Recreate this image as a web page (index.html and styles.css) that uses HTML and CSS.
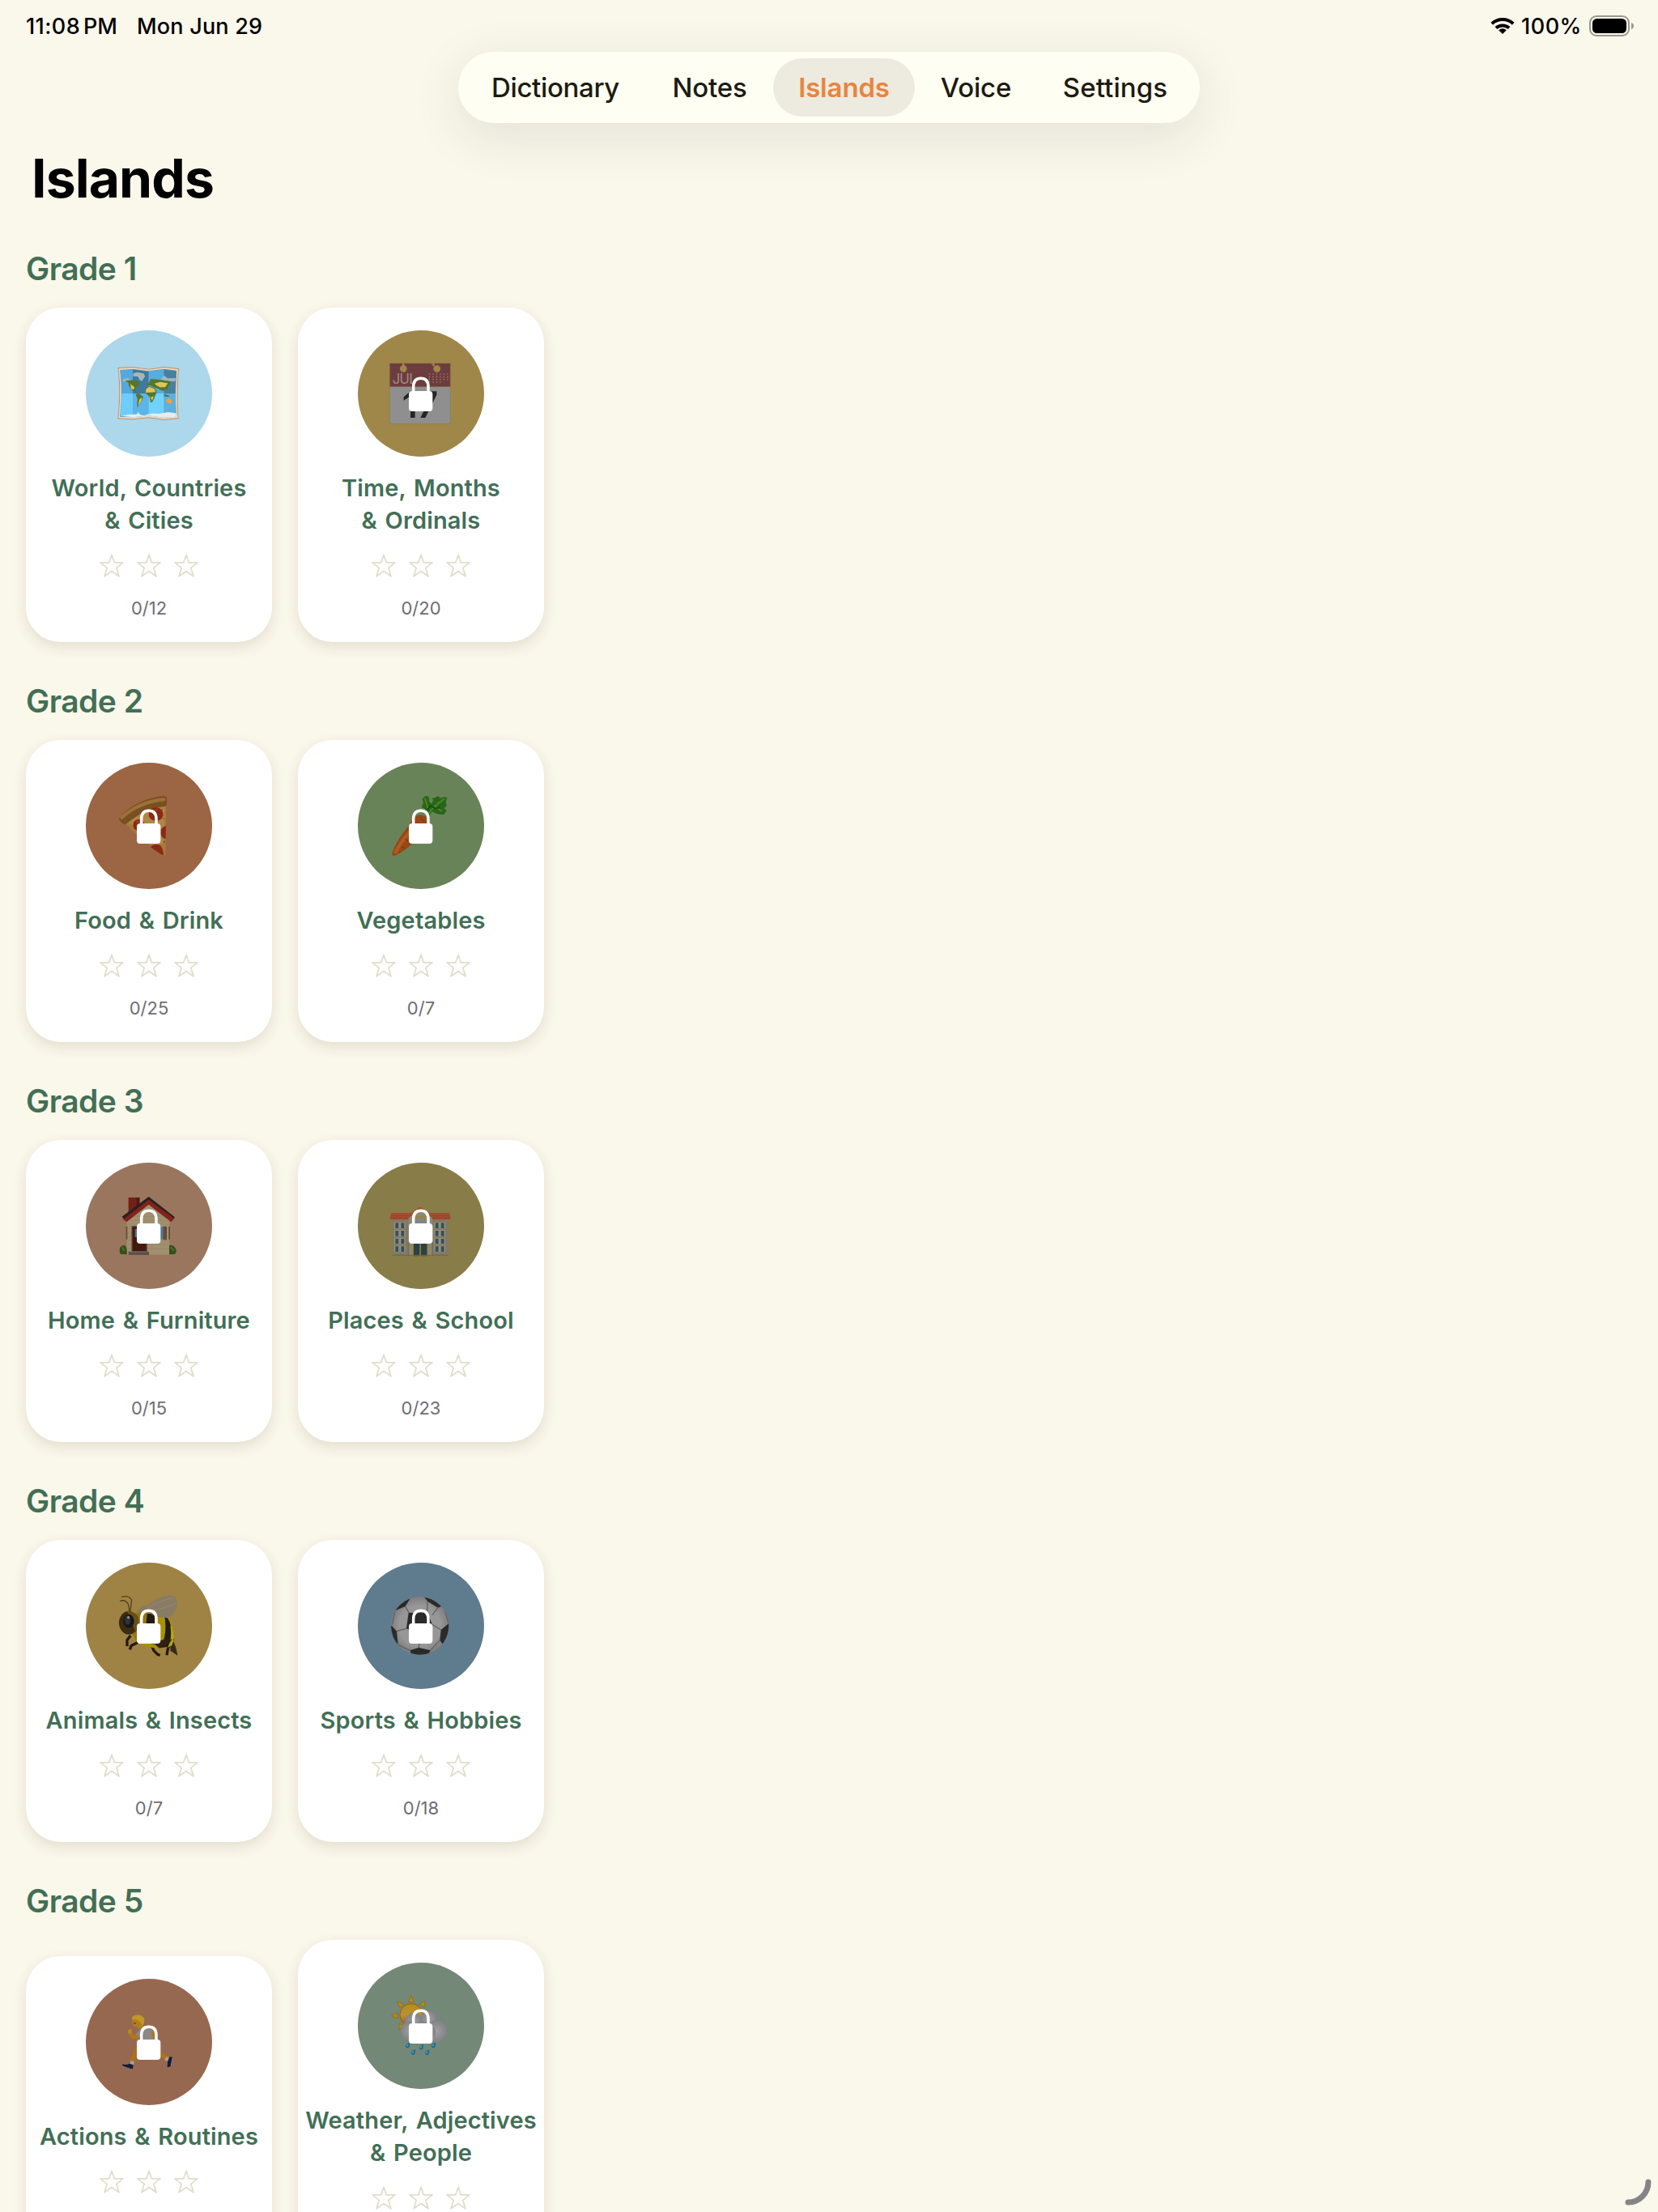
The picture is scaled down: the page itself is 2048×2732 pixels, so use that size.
FILE: index.html
```html
<!DOCTYPE html>
<html lang="en">
<head>
<meta charset="utf-8">
<title>Islands</title>
<link rel="stylesheet" href="styles.css">
</head>
<body>
<svg class="defs" aria-hidden="true">
  <symbol id="star" viewBox="0 0 30 29"><path d="M15 1.2 18.3 10.9H28.9L20.9 17.4 23.9 27.8 15 21.6 6.1 27.8 9.1 17.4 1.1 10.9H11.7Z" fill="none" stroke="#e0decb" stroke-width="1.8" stroke-linejoin="round"/></symbol>
  <symbol id="stars" viewBox="0 0 122 29"><use href="#star" x="0" width="30" height="29"/><use href="#star" x="46" width="30" height="29"/><use href="#star" x="92" width="30" height="29"/></symbol>
  <symbol id="lock" viewBox="0 0 468 468"><path d="M206 232V209C206 188 216 178 233.500 178S261 188 261 209V232" fill="none" stroke="#fff" stroke-width="10.500"/><rect x="189" y="225" width="88" height="75" rx="12" fill="#fff"/></symbol>
</svg>

<header class="status">
  <span class="time">11:08<span class="ampm">PM</span></span>
  <span class="date">Mon Jun 29</span>
  <svg class="wifi" viewBox="0 0 30 22"><g fill="none" stroke="#000" stroke-width="4"><path d="M1.800 8.200A19.500 19.500 0 0 1 28.200 8.200"/><path d="M6.900 13.600A12 12 0 0 1 23.100 13.600"/></g><path d="M15 21 10.200 16.200A7 7 0 0 1 19.800 16.200Z"/></svg>
  <span class="percent">100%</span>
  <svg class="battery" viewBox="0 0 56 26"><rect x="1" y="1" width="48" height="24" rx="8" fill="none" stroke="#9b998e" stroke-width="2"/><rect x="4" y="4" width="42" height="18" rx="5.500"/><path d="M52 9Q55 10 55 13T52 17Z" fill="#9b998e"/></svg>
</header>

<nav class="tabs">
  <a class="tab dictionary">Dictionary</a>
  <a class="tab notes">Notes</a>
  <a class="tab islands active">Islands</a>
  <a class="tab voice">Voice</a>
  <a class="tab settings">Settings</a>
</nav>

<main>
  <h1>Islands</h1>

  <section>
    <h2>Grade 1</h2>
    <div class="row">
      <article class="card">
        <svg class="badge map" viewBox="0 0 468 468">
          <path d="M119 138 174 135 233 143 290 135 345 141Q336 234 344 328L289 332 233 325 175 331 118 328Q129 234 119 138Z" fill="#c08f62"/>
          <path d="M122 141 174 138 233 146 290 138 342 144Q333 234 341 325L289 329 233 322 175 328 121 325Q132 234 122 141Z" fill="#eadcc8"/>
          <path d="M127 147 174 143 233 151 290 143 337 149Q329 234 336 320L289 323 233 316 175 322 126 320Q137 234 127 147Z" fill="#5f97bb"/>
          <path d="M127 149 174 145V234H134Q133 190 127 149Z" fill="#53a9de"/><path d="M174 145 233 153V234H174Z" fill="#40799d"/><path d="M233 153 290 145V234H233Z" fill="#55ade0"/><path d="M290 145 335 151 332 234H290Z" fill="#47819f"/>
          <path d="M134 234H174V320L128 318Z" fill="#6ecdff"/><path d="M174 234H233V314L174 320Z" fill="#5bb5e8"/><path d="M233 234H290V321L233 314Z" fill="#70d2ff"/><path d="M290 234H332L335 318 290 321Z" fill="#5dafdc"/>
          <path d="M175 160 190 155 215 160 219 171 208 188 199 183 193 171 176 170ZM136 183 151 176 170 184 167 191 139 190ZM276 183 290 167 304 178 335 177 330 190 290 186Z" fill="#a8b5b9"/>
          <path d="M145 187 170 184 195 190 199 199 185 216 180 216 185 226 195 234 188 232 172 222 160 207 158 194ZM185 237 196 233 213 247 207 263 196 275 191 287 190 268 192 256ZM226 203 237 190 240 180 275 183 313 190 311 203 304 207 303 220 294 219 287 225 277 221 269 217 255 212 241 205ZM221 216 235 207 254 213 263 228 256 245 248 265 240 268 236 246 222 233Z" fill="#56762a"/>
          <path d="M165 199 180 210 178 220 168 216ZM199 255 209 249 205 264 194 277ZM254 197 275 191 304 196 294 211 275 211 263 205ZM223 218 234 209 253 216 259 229 222 231ZM240 248 251 244 246 262Z" fill="#dfc65b"/>
          <path d="M297 258 306 251 317 257 320 266 314 273 300 266Z" fill="#f5a12d"/><path d="M288 236 305 241 311 245 292 245ZM307 202 305 216 300 223Z" fill="#497838"/>
          <path d="M132 317 158 312 189 311 194 302 200 312 215 316 229 311 245 308 273 309 305 303 334 307 336 320 289 323 233 316 175 322Z" fill="#e5edf0"/>
        </svg>
        <h3>World, Countries<br>&amp; Cities</h3>
        <svg class="stars"><use href="#stars"/></svg>
        <p>0/12</p>
      </article>
      <article class="card">
        <svg class="badge calendar" viewBox="0 0 468 468">
          <path d="M118 122H343V209H118Z" fill="#6d3d3e"/><path d="M118 209H343V346H118Z" fill="#8f8f8f"/><path d="M118 122V346H343V122" fill="none" stroke="#89794f" stroke-width="1.500"/>
          <g fill="#9f8749"><circle cx="169" cy="142" r="13"/><circle cx="293" cy="142" r="13"/><path d="M165 122H172V133H165ZM270 124 280 122H284V133H278L276 126Z"/></g>
          <text class="month" x="128" y="197">JUL</text>
          <path d="M263 162H337M263 172H337M263 182H337M250 192H310" stroke="#9f7170" stroke-width="5" stroke-dasharray="4 9.500"/>
          <path d="M170 247 195 226H212V324H195V244L170 260ZM218 226H292V239L250 324H232L272 242H218Z" fill="#252525"/>
          <use href="#lock"/>
        </svg>
        <h3>Time, Months<br>&amp; Ordinals</h3>
        <svg class="stars"><use href="#stars"/></svg>
        <p>0/20</p>
      </article>
    </div>
  </section>

  <section>
    <h2>Grade 2</h2>
    <div class="row">
      <article class="card">
        <svg class="badge pizza" viewBox="0 0 468 468">
          <path d="M146 226Q215 160 298 153L296 335Q294 347 284 341Q213 295 146 226Z" fill="#a6793d"/>
          <path d="M158 221Q220 169 292 164L290 300 273 302Z" fill="#ae8745"/>
          <path d="M123 210Q125 199 141 186 202 133 285 124 300 122 300 132V153Q299 162 290 162 216 170 148 228 139 231 134 222 126 219 123 210Z" fill="#785022"/>
          <path d="M133 203Q197 145 289 136" fill="none" stroke="#9b7135" stroke-width="13" stroke-linecap="round"/>
          <g fill="#8b2916"><ellipse cx="260" cy="191" rx="27" ry="25"/><ellipse cx="196" cy="231" rx="21" ry="21"/><path d="M297 233Q274 241 277 263 281 281 296 282ZM240 313Q250 299 274 305 286 312 288 343L277 338Z"/></g>
          <path d="M245 180Q254 173 265 176M186 221 201 217" stroke="#a6422a" stroke-width="5"/>
          <g fill="#643a1c"><circle cx="282" cy="174" r="2"/><circle cx="289" cy="207" r="2"/><circle cx="290" cy="293" r="3"/><circle cx="215" cy="190" r="2"/></g>
          <use href="#lock"/>
        </svg>
        <h3>Food &amp; Drink</h3>
        <svg class="stars"><use href="#stars"/></svg>
        <p>0/25</p>
      </article>
      <article class="card">
        <svg class="badge carrot" viewBox="0 0 468 468">
          <path d="M126 337Q143 286 190 232 204 199 225 194 255 191 264 218 265 242 215 288 174 329 138 344 127 347 126 337Z" fill="#974817"/>
          <path d="M137 336Q162 287 213 235" fill="none" stroke="#b05c20" stroke-width="12"/><path d="M162 312 173 316M174 282 187 291M232 207 247 218" stroke="#763812" stroke-width="3"/>
          <path d="M257 199Q243 184 250 172L236 165 243 149 239 134 250 123 263 126 265 143 273 153 280 137 273 132 287 130 297 123 305 131 319 127 331 129 326 147 330 158 320 169 329 178 318 193 301 191 287 187 275 181 263 198Z" fill="#26671a"/>
          <path d="M261 190Q277 163 322 133M249 132 259 169M287 162 311 180" fill="none" stroke="#4c861c" stroke-width="6"/><path d="M258 173 270 159 286 169 305 166" fill="none" stroke="#184b16" stroke-width="5"/>
          <use href="#lock"/>
        </svg>
        <h3>Vegetables</h3>
        <svg class="stars"><use href="#stars"/></svg>
        <p>0/7</p>
      </article>
    </div>
  </section>

  <section>
    <h2>Grade 3</h2>
    <div class="row">
      <article class="card">
        <svg class="badge house" viewBox="0 0 468 468">
          <path d="M158 129H199V195H158Z" fill="#732019"/><path d="M188 129H199V180H188Z" fill="#4f1713"/>
          <path d="M152 205 233 142 310 205V341H152Z" fill="#a19070"/>
          <path d="M154 228H308M154 243H308M154 258H308M154 273H308M154 288H308M154 303H308M154 318H308M187 185H276M174 199H292M162 214H303" stroke="#948365" stroke-width="2"/>
          <path d="M134 200 233 126 330 202 321 212 233 145 143 213Z" fill="#242321"/><path d="M139 209 233 137 328 207 316 220 233 155 151 220Z" fill="#84211b"/>
          <path d="M169 234H228V331H169Z" fill="#65503b"/><path d="M173 238H224V330H173Z" fill="#43180f"/><path d="M182 246H205V276H182ZM268 238H287V284H268Z" fill="#4c7591"/><path d="M287 236H300V286H287ZM307 236H312V284H307ZM149 236H154V284H149Z" fill="#634a37"/>
          <path d="M158 329H234V342H158Z" fill="#5b504b"/><path d="M164 330H228" stroke="#82736c" stroke-width="3"/>
          <path d="M128 339Q118 308 143 306 152 307 153 340ZM309 340V307Q325 302 334 320 337 331 330 339Z" fill="#344f1c"/><path d="M134 312 144 328M315 313 326 326" stroke="#587027" stroke-width="5"/>
          <use href="#lock"/>
        </svg>
        <h3>Home &amp; Furniture</h3>
        <svg class="stars"><use href="#stars"/></svg>
        <p>0/15</p>
      </article>
      <article class="card">
        <svg class="badge school" viewBox="0 0 468 468">
          <path d="M127 209H336V343H127Z" fill="#817a60"/><path d="M124 186H340L344 208 339 211H123L119 208Z" fill="#a54d30"/><path d="M122 197H341M120 205H343" stroke="#874028" stroke-width="2"/>
          <path d="M188 205 232 169 276 205V345H188Z" fill="#908873"/><path d="M198 184 231 164 265 184 274 195 231 173 188 195Z" fill="#a54d30"/>
          <ellipse cx="232" cy="216" rx="25" ry="23" fill="#858585"/><path d="M210 208Q232 187 254 208" fill="none" stroke="#9b862e" stroke-width="6"/>
          <path d="M145 221V335M166 221V335M293 221V335M314 221V335" stroke="#aaa084" stroke-width="18" stroke-dasharray="23 6"/><path d="M145 223V335M166 223V335M293 223V335M314 223V335" stroke="#334e60" stroke-width="12" stroke-dasharray="20 9"/>
          <path d="M188 295V346M276 295V346" stroke="#77715e" stroke-width="6"/><path d="M203 298H260V347H203Z" fill="#927f2b"/><path d="M207 298H229V346H207ZM234 298H256V346H234Z" fill="#2b4148"/><path d="M128 343H336" stroke="#6a6658" stroke-width="3"/>
          <use href="#lock"/>
        </svg>
        <h3>Places &amp; School</h3>
        <svg class="stars"><use href="#stars"/></svg>
        <p>0/23</p>
      </article>
    </div>
  </section>

  <section>
    <h2>Grade 4</h2>
    <div class="row">
      <article class="card">
        <svg class="badge bee" viewBox="0 0 468 468">
          <path d="M132 127Q160 119 170 139L164 184M126 142Q149 135 158 156L162 185" fill="none" stroke="#574020" stroke-width="4"/>
          <path d="M166 270 153 287 153 310M194 295 168 308 163 322M242 302 252 326 266 340 275 343M323 281 304 319 300 343" fill="none" stroke="#251b10" stroke-width="10"/>
          <path d="M316 276Q335 306 340 344L313 326Z" fill="#372a18"/>
          <path d="M176 193Q214 167 278 194 326 202 326 273 320 327 252 316 179 306 169 258Z" fill="#a99100"/>
          <path d="M176 195Q199 169 230 185L214 280 188 291 169 258Z" fill="#927514"/><path d="M227 189H258L253 302 217 296ZM291 194Q333 227 309 311L277 316Q304 263 291 194Z" fill="#241c11"/>
          <path d="M318 236Q333 277 319 307L303 315Q321 281 313 234Z" fill="#b1a51c"/><path d="M250 298Q283 281 319 284 307 308 273 317Z" fill="#30220e"/>
          <path d="M185 188Q206 155 227 158 263 129 309 121 333 117 339 142 339 185 311 202 284 210 247 193 219 173 185 188Z" fill="#8a7b64"/><path d="M229 168Q278 139 327 130M235 178Q292 171 337 149" fill="none" stroke="#968770" stroke-width="3"/>
          <ellipse cx="159" cy="223" rx="36" ry="43" fill="#3b2b12"/><path d="M153 179Q185 181 195 203L197 230 185 260Q172 223 153 179Z" fill="#675018"/><ellipse cx="159" cy="217" rx="20" ry="25" fill="#171717"/><ellipse cx="155" cy="213" rx="11" ry="17" fill="#303236"/><ellipse cx="158" cy="203" rx="5" ry="5" fill="#92928f"/>
          <use href="#lock"/>
        </svg>
        <h3>Animals &amp; Insects</h3>
        <svg class="stars"><use href="#stars"/></svg>
        <p>0/7</p>
      </article>
      <article class="card">
        <svg class="badge ball" viewBox="0 0 468 468">
          <defs><clipPath id="ball-edge"><circle cx="230" cy="234" r="107"/></clipPath><radialGradient id="ball-shade"><stop offset=".7" stop-color="#979797"/><stop offset="1" stop-color="#7d7d7d"/></radialGradient></defs>
          <circle cx="230" cy="234" r="108" fill="url(#ball-shade)"/>
          <g clip-path="url(#ball-edge)"><path d="M138 178 176 162 194 133 165 120 123 157ZM243 124 258 143 297 167 321 157 294 126ZM188 186 258 184 276 230 231 267 180 244ZM125 233 144 254 149 304 137 308 113 252ZM308 249 338 224 348 274 315 304 304 287ZM193 325 226 315 269 325 260 346H201Z" fill="#2a2a2a"/><path d="M176 162 190 187M258 143 257 184M297 167 276 194M316 157 336 224M138 178 127 229M144 254 180 244M276 230 308 249M231 267 226 315M149 304 193 325M304 287 269 325" fill="none" stroke="#606060" stroke-width="4"/></g>
          <use href="#lock"/>
        </svg>
        <h3>Sports &amp; Hobbies</h3>
        <svg class="stars"><use href="#stars"/></svg>
        <p>0/18</p>
      </article>
    </div>
  </section>

  <section>
    <h2>Grade 5</h2>
    <div class="row">
      <article class="card">
        <svg class="badge runner" viewBox="0 0 468 468">
          <path d="M190 260Q181 287 171 307M272 279 306 296" fill="none" stroke="#ad711c" stroke-width="17"/><path d="M165 309 178 313M303 291 297 303" stroke="#a7a3a0" stroke-width="11"/>
          <path d="M135 316Q150 321 163 314L176 320 174 333Q170 338 158 333L137 324ZM311 288 322 292 315 325 302 328 303 308Z" fill="#151c37"/><path d="M136 324 172 336M321 294 315 326" stroke="#858089" stroke-width="3"/>
          <path d="M204 184Q222 174 249 188L264 215 244 267 204 258 211 224 183 207Z" fill="#8b8886"/><path d="M241 188Q262 198 257 225L247 218Z" fill="#b0791d"/><path d="M183 207 188 217 175 216 161 199" fill="none" stroke="#ae781d" stroke-width="13"/><path d="M155 192 163 185 171 187 170 202 158 204Z" fill="#bd861f"/>
          <path d="M174 148H211L212 169 217 181 201 185 188 180 176 175 172 165Z" fill="#b27d1e"/><path d="M171 151Q169 137 184 134 205 130 216 146 220 163 209 174L201 159 187 151Z" fill="#bf9828"/><path d="M178 164 185 166" stroke="#45351b" stroke-width="4"/>
          <use href="#lock"/>
        </svg>
        <h3>Actions &amp; Routines</h3>
        <svg class="stars"><use href="#stars"/></svg>
        <p></p>
      </article>
      <article class="card">
        <svg class="badge weather" viewBox="0 0 468 468">
          <defs><linearGradient id="sun" x2="0" y2="1"><stop stop-color="#b78c16"/><stop offset=".5" stop-color="#b99232"/><stop offset="1" stop-color="#a05a0c"/></linearGradient><radialGradient id="cloud"><stop stop-color="#a0a0a2"/><stop offset="1" stop-color="#828286"/></radialGradient></defs>
          <path d="M198 121 208 146H188ZM146 144 169 152 157 168ZM124 197 147 186V207ZM250 142 246 166 230 153ZM153 226 169 232 153 250Z" fill="#b48b14" stroke="#9c600f" stroke-width="2"/><circle cx="198" cy="194" r="42" fill="url(#sun)" stroke="#a35c0b" stroke-width="3"/>
          <g fill="url(#cloud)"><circle cx="207" cy="218" r="32"/><circle cx="262" cy="209" r="31"/><circle cx="193" cy="252" r="35"/><circle cx="291" cy="254" r="40"/><ellipse cx="239" cy="258" rx="49" ry="37"/></g>
          <g fill="#17709d"><path id="drop" d="M193 296Q194 312 188 316 179 319 177 309 178 302 193 296Z"/><use href="#drop" x="50" y="6"/><use href="#drop" x="95"/><use href="#drop" x="20" y="25"/><use href="#drop" x="72" y="26"/></g><path d="M186 304 182 309M236 310 232 315M281 304 277 309M206 329 202 334M258 330 254 335" stroke="#73a5b1" stroke-width="4"/>
          <use href="#lock"/>
        </svg>
        <h3>Weather, Adjectives<br>&amp; People</h3>
        <svg class="stars"><use href="#stars"/></svg>
        <p></p>
      </article>
    </div>
  </section>
</main>
<svg class="corner" viewBox="0 0 36 36"><path d="M29 4A25 25 0 0 1 4 29" fill="none" stroke="#848484" stroke-width="7" stroke-linecap="round"/></svg>
</body>
</html>
```
FILE: styles.css
```css
* { box-sizing: border-box; margin: 0; }
html { height: 100%; overflow: hidden; }
body {
  height: 2732px;
  overflow: hidden;
  background: #faf7eb;
  color: #000;
  font-family: Inter, "Liberation Sans", sans-serif;
}
.defs { position: absolute; width: 0; height: 0; }

.status {
  display: flex;
  align-items: center;
  height: 64px;
  padding: 0 29px 0 32px;
  font-size: 27px;
  font-weight: 500;
  white-space: nowrap;
}
.time { width: 137px; letter-spacing: .4px; }
.ampm { margin-left: 4px; letter-spacing: 0; }
.date { letter-spacing: .2px; }
.wifi { width: 30px; height: 22px; margin-left: auto; margin-right: 8px; }
.percent { width: 76px; margin-right: 8px; letter-spacing: .5px; }
.battery { width: 56px; height: 26px; }

.tabs {
  display: flex;
  width: 916px;
  height: 88px;
  margin: 0 auto;
  padding: 8px;
  border-radius: 44px;
  background: #fffef2;
  box-shadow: 0 16px 64px rgba(50, 55, 40, .11);
}
.tab {
  display: flex;
  align-items: center;
  justify-content: center;
  border-radius: 36px;
  color: #1d1b10;
  font-size: 33px;
  font-weight: 500;
  letter-spacing: -.15px;
}
.dictionary { width: 224px; letter-spacing: -.35px; }
.notes { width: 157px; }
.islands { width: 175px; }
.voice { width: 151px; }
.settings { width: 193px; letter-spacing: .1px; }
.tab.active { background: #edebdf; color: #e68541; font-weight: 600; }

main { padding: 28px 32px 0; }
h1 {
  height: 128px;
  padding-left: 7px;
  font-size: 66px;
  font-weight: 700;
  line-height: 80px;
  letter-spacing: -.9px;
}
section + section { margin-top: 49px; }
h2 {
  margin-bottom: 24px;
  color: #426f56;
  font-size: 39px;
  font-weight: 600;
  line-height: 48px;
  letter-spacing: -.55px;
}
.row { display: flex; align-items: center; gap: 32px; }
.card {
  display: flex;
  flex-direction: column;
  align-items: center;
  width: 304px;
  padding: 28px 0 26px;
  border-radius: 43px;
  background: #fff;
  box-shadow: 0 6px 16px rgba(100, 90, 40, .15);
}
.badge { width: 156px; height: 156px; border-radius: 50%; }
.map { background: #add7ea; }
.calendar { background: #9f8749; }
.pizza { background: #9c6543; }
.carrot { background: #698359; }
.house { background: #9a765e; }
.school { background: #887c48; }
.bee { background: #9f8344; }
.ball { background: #5f7b8e; }
.runner { background: #976850; }
.weather { background: #738876; }
.month { fill: #a18c8b; font-size: 50px; letter-spacing: -2px; }
h3 {
  margin-top: 19px;
  color: #426f56;
  font-size: 29px;
  font-weight: 600;
  line-height: 40px;
  letter-spacing: .13px;
  word-spacing: 2.2px;
  text-align: center;
  white-space: nowrap;
}
.stars { width: 122px; height: 29px; margin-top: 21px; }
.card p {
  min-height: 31px;
  margin-top: 23px;
  color: #6e6d76;
  font-size: 22px;
  line-height: 31px;
}
.corner { position: fixed; right: 5px; bottom: 5px; width: 36px; height: 36px; }
```
